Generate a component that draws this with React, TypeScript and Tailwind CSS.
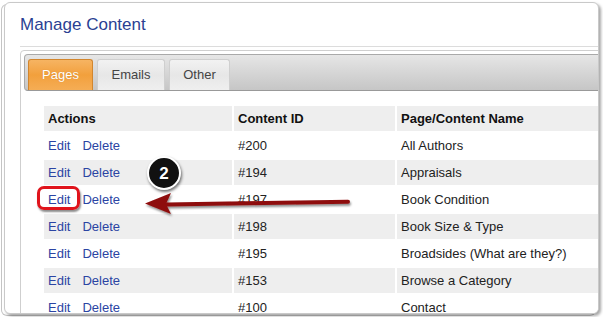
const rows = [
  { id: '#200', name: 'All Authors' },
  { id: '#194', name: 'Appraisals' },
  { id: '#197', name: 'Book Condition' },
  { id: '#198', name: 'Book Size & Type' },
  { id: '#195', name: 'Broadsides (What are they?)' },
  { id: '#153', name: 'Browse a Category' },
  { id: '#100', name: 'Contact' },
];

const tabs = [
  { label: 'Pages', w: 'w-[65px]', active: true },
  { label: 'Emails', w: 'w-[68px]', active: false },
  { label: 'Other', w: 'w-[61px]', active: false },
];

export default function App() {
  return (
    <div className="relative w-[603px] h-[317px] bg-white overflow-hidden font-['Liberation_Sans',Arial,sans-serif]">
      <div className="pl-[4px] pt-[2px]">
        <div className="w-[595px] h-[312px] rounded-[6px] border border-[#c9c9c9] bg-white overflow-hidden shadow-[2px_2px_3px_rgba(0,0,0,0.35),-3px_2px_0_-1px_#fff,-3px_2px_0_0_#c4c4c4]">
          <div className="pl-[15px] pt-[12px]">
            <div className="pb-[11px] border-b border-[#dcdcdc]">
              <h1 className="text-[17px] leading-[20px] text-[#2b3f93] font-normal">Manage Content</h1>
            </div>

            <div className="mt-[3px] w-[700px] border border-[#cfcfcf] rounded-[4px] p-[3px]">
              <div className="h-[37px] flex items-end gap-[4px] pl-[3px] border border-[#a9a9a9] border-b-[#999] rounded-[4px] bg-linear-to-b from-[#e6e6e6] to-[#c6c6c6]">
                {tabs.map((t) =>
                  t.active ? (
                    <div
                      key={t.label}
                      className={`${t.w} h-[31px] flex items-center justify-center rounded-t-[3px] border border-b-0 border-[#d2862e] bg-linear-to-b from-[#f6b462] via-[#f2a03c] to-[#f5ad55] text-white text-[13px] [text-shadow:0_0_1px_rgba(150,80,0,0.4)]`}
                    >
                      {t.label}
                    </div>
                  ) : (
                    <div
                      key={t.label}
                      className={`${t.w} h-[31px] flex items-center justify-center rounded-t-[3px] border border-b-0 border-[#cfcfcf] bg-linear-to-b from-[#f2f2f2] via-[#e7e7e7] to-[#efefef] text-[#444] text-[13px]`}
                    >
                      {t.label}
                    </div>
                  )
                )}
              </div>

              <div className="pl-[18px] pt-[13px]">
                <table className="table-fixed border-separate border-spacing-[2px] text-[13px] text-[#222]">
                  <colgroup>
                    <col className="w-[188px]" />
                    <col className="w-[161px]" />
                    <col className="w-[260px]" />
                  </colgroup>
                  <thead>
                    <tr className="bg-[#eeeeee]">
                      <th className="h-[25px] px-[4px] text-left font-bold text-[#111]">Actions</th>
                      <th className="h-[25px] px-[4px] text-left font-bold text-[#111]">Content ID</th>
                      <th className="h-[25px] px-[4px] text-left font-bold text-[#111]">Page/Content Name</th>
                    </tr>
                  </thead>
                  <tbody>
                    {rows.map((r, i) => (
                      <tr key={r.id} className={i % 2 === 1 ? 'bg-[#eeeeee]' : 'bg-white'}>
                        <td className="h-[25px] px-[4px] whitespace-nowrap">
                          <span className="text-[#2b44a3] mr-[12px]">Edit</span>
                          <span className="text-[#2b44a3]">Delete</span>
                        </td>
                        <td className="h-[25px] px-[4px] whitespace-nowrap">{r.id}</td>
                        <td className="h-[25px] px-[4px] whitespace-nowrap">{r.name}</td>
                      </tr>
                    ))}
                  </tbody>
                </table>
              </div>
            </div>
          </div>
        </div>
      </div>

      {/* red highlight around Edit */}
      <div className="absolute left-[37px] top-[186px] w-[43px] h-[24px] border-[3px] border-[#e0141c] rounded-[7px] shadow-[1px_2px_2px_rgba(0,0,0,0.45)]" />

      {/* arrow */}
      <svg className="absolute left-0 top-0 pointer-events-none" width="603" height="317" viewBox="0 0 603 317">
        <defs>
          <filter id="sh" x="-10%" y="-50%" width="120%" height="200%">
            <feDropShadow dx="1" dy="2" stdDeviation="1.2" floodColor="#000" floodOpacity="0.45" />
          </filter>
        </defs>
        <g filter="url(#sh)">
          <path d="M166 204.5 L348 201.8" stroke="#8e0d0d" strokeWidth="4" strokeLinecap="round" />
          <path d="M145 203.5 L171 193 L166 204 L171 214 Z" fill="#8e0d0d" />
        </g>
      </svg>

      {/* step badge */}
      <div className="absolute left-[147px] top-[156px] w-[34px] h-[34px] rounded-full bg-[#111] border-2 border-white shadow-[1px_2px_3px_rgba(0,0,0,0.55)] flex items-center justify-center text-white font-bold text-[17px] leading-none">
        2
      </div>
    </div>
  );
}
